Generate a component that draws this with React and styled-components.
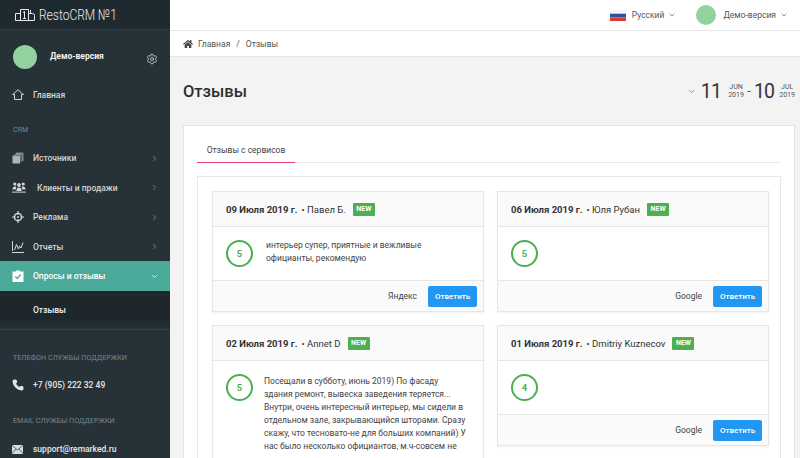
import React from "react";
import styled, { createGlobalStyle } from "styled-components";
import { ChevronRight, ChevronDown, Settings, Phone } from "lucide-react";
import { FaHome } from "react-icons/fa";

const Global = createGlobalStyle`
  html, body { margin: 0; padding: 0; height: 458px; overflow: hidden; background: #f3f3f3; }
  body { font-family: Roboto, "Liberation Sans", sans-serif; color: #333; }
  * { box-sizing: border-box; }
`;

const Page = styled.div`
  display: flex;
  width: 800px;
  height: 458px;
  overflow: hidden;
`;

const Sidebar = styled.aside`
  width: 170px;
  flex: none;
  background: #263238;
  color: #d5d8d9;
  overflow: hidden;
`;

const Brand = styled.div`
  height: 30px;
  display: flex;
  align-items: center;
  gap: 4px;
  padding-left: 15px;
  background: #1f2a30;
  border-bottom: 1px solid #2f3c43;
  color: #e8eaea;
  font-size: 15px;
  font-weight: 300;
  white-space: nowrap;
  span { display: block; transform: scaleX(0.8); transform-origin: left center; }
`;

const Profile = styled.div`
  display: flex;
  align-items: center;
  height: 50px;
  padding: 4px 12px 0 13px;
  font-size: 8.5px;
  font-weight: 700;
  color: #f2f2f2;
  span { margin: 0 auto 3px 13px; }
  svg { margin-top: 3px; }
`;

const Avatar = styled.div`
  width: ${(p) => p.size}px;
  height: ${(p) => p.size}px;
  flex: none;
  border-radius: 50%;
  background: #92d29c;
`;

const MenuItem = styled.div`
  height: 29.5px;
  display: flex;
  align-items: center;
  padding: 0 11px 0 12px;
  font-size: 8.5px;
  font-weight: 500;
  color: ${(p) => (p.$active ? "#fff" : "#d3d6d7")};
  background: ${(p) => (p.$active ? "#4ba99a" : "transparent")};
  svg:first-child { flex: none; width: ${(p) => p.$iconWidth || 12}px; }
  span { margin-left: ${(p) => p.$gap || 9}px; margin-right: auto; }
`;

const SectionLabel = styled.div`
  font-size: 7.2px;
  color: #7c8488;
  padding: ${(p) => p.$top}px 0 0 13px;
  height: ${(p) => p.$h}px;
  display: flex;
  align-items: center;
  white-space: nowrap;
`;

const SubMenu = styled.div`
  height: 39.25px;
  background: linear-gradient(#1e272c 75%, #263238);
  border-bottom: 1px solid #354249;
  padding-left: 33px;
  display: flex;
  align-items: center;
  font-size: 8.5px;
  font-weight: 500;
  color: #f2f2f2;
`;

const ContactRow = styled.div`
  height: 30px;
  display: flex;
  align-items: center;
  gap: ${(p) => p.$gap}px;
  padding-left: 12px;
  font-size: 8.5px;
  font-weight: 500;
  color: #e6e8e8;
`;

const Main = styled.main`
  flex: 1;
  min-width: 0;
  display: flex;
  flex-direction: column;
`;

const Topbar = styled.header`
  height: 31px;
  flex: none;
  background: #fff;
  border-bottom: 1px solid #e6e6e6;
  display: flex;
  align-items: center;
  justify-content: flex-end;
  gap: 20px;
  font-size: 8.5px;
  color: #555;
  padding-right: 12px;
`;

const TopItem = styled.div`
  display: flex;
  align-items: center;
  gap: ${(p) => p.$gap}px;
  white-space: nowrap;
  svg:last-child { margin-left: ${(p) => 4 - p.$gap}px; }
`;

const Crumbs = styled.nav`
  height: 26px;
  flex: none;
  background: #fff;
  border-bottom: 1px solid #e6e6e6;
  display: flex;
  align-items: center;
  padding-left: 13px;
  font-size: 8.5px;
  color: #555;
  svg { margin-right: 5px; }
  i { font-style: normal; margin: 0 6px; }
`;

const Content = styled.div`
  padding: 0 5px 0 13px;
  flex: 1;
  min-height: 0;
`;

const Heading = styled.div`
  height: 68px;
  display: flex;
  align-items: center;
  justify-content: space-between;
  h1 { margin: 0; font-size: 16.5px; font-weight: 500; color: #2e2e2e; }
`;

const DateRange = styled.div`
  display: flex;
  align-items: center;
  color: #333;
  font-size: 19.5px;
  letter-spacing: -0.8px;
`;

const DateSmall = styled.div`
  font-size: 7px;
  line-height: 8.5px;
  letter-spacing: 0;
  text-align: center;
  margin-left: ${(p) => p.$left}px;
  color: #555;
`;

const DateDash = styled.span`
  font-size: 14px;
  font-weight: 300;
  letter-spacing: 0;
  margin: 0 3px;
`;

const DateChevron = styled(ChevronDown)`
  margin-right: 5px;
`;

const Panel = styled.section`
  width: 612px;
  background: #fff;
  border: 1px solid #e4e4e4;
  padding: 12px 13px 0 13px;
  height: 400px;
`;

const Tabs = styled.div`
  height: 25px;
  border-bottom: 1px solid #e8e8e8;
`;

const Tab = styled.div`
  width: 98px;
  height: 25px;
  border-bottom: 1.5px solid #ec407a;
  font-size: 8.5px;
  color: #444;
  display: flex;
  align-items: center;
  justify-content: center;
`;

const CardsBox = styled.div`
  margin-top: 13px;
  border: 1px solid #e8e8e8;
  padding: 14px 12px 14px 14px;
  display: grid;
  grid-template-columns: 272px 272px;
  column-gap: 13px;
  row-gap: 13px;
`;

const Card = styled.article`
  border: 1px solid #e6e6e6;
  box-shadow: 0 1px 2px rgba(0, 0, 0, 0.06);
  background: #fff;
  align-self: ${(p) => (p.$tall ? "stretch" : "start")};
`;

const CardHead = styled.div`
  height: 35px;
  background: #fafafa;
  border-bottom: 1px solid #e6e6e6;
  display: flex;
  align-items: center;
  padding-left: 13px;
  font-size: 9.5px;
  color: #333;
  white-space: nowrap;
  b { font-weight: 700; margin-right: 4px; }
`;

const NewBadge = styled.span`
  background: #4caf50;
  color: #fff;
  font-size: 7px;
  font-weight: 700;
  height: 13px;
  width: 22px;
  display: flex;
  align-items: center;
  justify-content: center;
  margin-left: 7px;
  border-radius: 1px;
`;

const CardBody = styled.div`
  display: flex;
  gap: ${(p) => p.$gap || 13}px;
  padding: 13px;
  min-height: 53px;
  height: ${(p) => (p.$auto ? "auto" : "53px")};
  font-size: 8.5px;
  line-height: 13px;
  color: #444;
  p { margin: ${(p) => p.$textTop || 0}px 0 0; width: ${(p) => p.$textWidth}px; flex: none; }
`;

const Score = styled.div`
  width: 27px;
  height: 27px;
  flex: none;
  border-radius: 50%;
  border: 2px solid #4caf50;
  color: #4caf50;
  font-size: 9.5px;
  font-weight: 700;
  display: flex;
  align-items: center;
  justify-content: center;
`;

const CardFoot = styled.div`
  height: 31px;
  background: #fafafa;
  border-top: 1px solid #e6e6e6;
  display: flex;
  align-items: center;
  justify-content: flex-end;
  gap: 11px;
  padding-right: 6px;
  font-size: 8.5px;
  color: #444;
`;

const ReplyButton = styled.button`
  width: 49px;
  height: 21px;
  border: 0;
  border-radius: 2px;
  background: #2196f3;
  color: #fff;
  font: 500 8px Roboto, sans-serif;
  padding: 0;
`;

const Flag = () => (
  <svg width="16" height="11" viewBox="0 0 16 11">
    <rect width="16" height="3.7" fill="#f4f4f4" />
    <rect y="3.7" width="16" height="3.7" fill="#2a4fa8" />
    <rect y="7.4" width="16" height="3.6" fill="#e0392b" />
  </svg>
);

const Logo = () => (
  <svg width="20" height="12" viewBox="0 0 20 12" fill="none" stroke="#e8eaea" strokeWidth="1">
    <path d="M.5 11.500h19M.5 11.500V4.500h5M5.500 11.500V.5h8v11M13.500 11.500V4.500h4a2 2 0 0 1 2 2v5" />
    <path d="M8 3.500l1.500-1v6.500M8 9.500h3" />
    <path d="M15.500 4.500V1" />
  </svg>
);

const HomeIcon = () => (
  <svg width="12" height="11" viewBox="0 0 12 11" fill="none" stroke="#d3d6d7" strokeWidth="1">
    <path d="M.6 5.500 6 .8l5.400 4.700H9.500v5h-7v-5z" />
  </svg>
);

const SourcesIcon = () => (
  <svg width="12" height="12" viewBox="0 0 12 12" fill="#aeb3b5">
    <path d="M4 .5h7.500v8.500H10V2H4z" opacity=".65" />
    <path d="M2.500 2h7v8H8.500V3h-6z" opacity=".8" />
    <rect x=".5" y="3.500" width="7.500" height="8" />
  </svg>
);

const ClientsIcon = () => (
  <svg width="14" height="11" viewBox="0 0 14 11" fill="#d3d6d7">
    <circle cx="2.800" cy="2" r="1.600" />
    <circle cx="11.200" cy="2" r="1.600" />
    <circle cx="7" cy="3" r="1.900" />
    <path d="M.5 7.500c0-2 1-3 2.300-3s1.600.6 1.600.6c-.4.600-.6 1.400-.6 2.400zM13.500 7.500c0-2-1-3-2.300-3s-1.600.6-1.600.6c.4.600.6 1.400.6 2.400z" />
    <path d="M4.400 9c0-2.400 1.100-3.400 2.600-3.400S9.600 6.600 9.600 9z" />
    <rect y="9.600" width="14" height="1" />
  </svg>
);

const TargetIcon = () => (
  <svg width="12" height="12" viewBox="0 0 12 12" fill="none" stroke="#d3d6d7">
    <circle cx="6" cy="6" r="3.600" strokeWidth="1.500" />
    <path d="M6 0v3.500M6 8.500V12M0 6h3.500M8.500 6H12" strokeWidth="1.200" />
    <circle cx="6" cy="6" r="1" fill="#d3d6d7" stroke="none" />
  </svg>
);

const ChartIcon = () => (
  <svg width="12" height="12" viewBox="0 0 12 12" fill="none" stroke="#d3d6d7" strokeWidth="1">
    <path d="M.5 0v10M0 11.500h12" />
    <path d="M2.500 9 4.500 3.500 6.500 8l1-3 1.500 2 2-5.500" />
  </svg>
);

const SurveyIcon = () => (
  <svg width="11" height="12" viewBox="0 0 11 12">
    <path d="M0 1.500h3.500V.5h4v1H11V12H0z" fill="#fff" />
    <path d="M2.800 6.500 4.800 8.500 8.300 4.500" fill="none" stroke="#4ba99a" strokeWidth="1.300" />
  </svg>
);

const MailIcon = () => (
  <svg width="11" height="9" viewBox="0 0 11 9" fill="#d8dbdc" stroke="#263238" strokeWidth=".7">
    <rect width="11" height="9" stroke="none" />
    <path d="M0 .3 5.500 5 11 .3M0 8.700 4 3.800M11 8.700 7 3.800" fill="none" />
  </svg>
);

const reviews = [
  { date: "09 Июля 2019 г.", name: "Павел Б.", score: 5, source: "Яндекс", text: "интерьер супер, приятные и вежливые официанты, рекомендую", gap: 13, top: -1, width: 190 },
  { date: "06 Июля 2019 г.", name: "Юля Рубан", score: 5, source: "Google" },
  {
    date: "02 Июля 2019 г.",
    name: "Annet D",
    score: 5,
    text: [
      "Посещали в субботу, июнь 2019) По фасаду",
      "здания ремонт, вывеска заведения теряется...",
      "Внутри, очень интересный интерьер, мы сидели в",
      "отдельном зале, закрывающийся шторами. Сразу",
      "скажу, что тесновато-не для больших компаний) У",
      "нас было несколько официантов, м.ч-совсем не",
    ],
    gap: 11,
    top: 1,
    width: 210,
    tall: true,
  },
  { date: "01 Июля 2019 г.", name: "Dmitriy Kuznecov", score: 4, source: "Google" },
];

const nav = [
  { label: "Источники", Icon: SourcesIcon },
  { label: "Клиенты и продажи", Icon: ClientsIcon, gap: 11, iconWidth: 14 },
  { label: "Реклама", Icon: TargetIcon },
  { label: "Отчеты", Icon: ChartIcon },
];

export default function App() {
  return (
    <Page>
      <Global />
      <Sidebar>
        <Brand><Logo /><span>RestoCRM №1</span></Brand>
        <Profile>
          <Avatar size={24} />
          <span>Демо-версия</span>
          <Settings size={12} strokeWidth={1.4} color="#e8eaea" />
        </Profile>
        <MenuItem><HomeIcon /><span>Главная</span></MenuItem>
        <SectionLabel $h={33.75} $top={7}>CRM</SectionLabel>
        {nav.map(({ label, Icon, gap, iconWidth }) => (
          <MenuItem key={label} $gap={gap} $iconWidth={iconWidth}>
            <Icon />
            <span>{label}</span>
            <ChevronRight size={9} color="#8b9194" />
          </MenuItem>
        ))}
        <MenuItem $active>
          <SurveyIcon />
          <span>Опросы и отзывы</span>
          <ChevronDown size={9} />
        </MenuItem>
        <SubMenu>Отзывы</SubMenu>
        <SectionLabel $h={40} $top={14}>ТЕЛЕФОН СЛУЖБЫ ПОДДЕРЖКИ</SectionLabel>
        <ContactRow $gap={9}><Phone size={12} fill="#e6e8e8" />+7 (905) 222 32 49</ContactRow>
        <SectionLabel $h={34} $top={6}>EMAIL СЛУЖБЫ ПОДДЕРЖКИ</SectionLabel>
        <ContactRow $gap={10}><MailIcon /><span>support@remarked.ru</span></ContactRow>
      </Sidebar>
      <Main>
        <Topbar>
          <TopItem $gap={6}><Flag />Русский<ChevronDown size={8} /></TopItem>
          <TopItem $gap={7}><Avatar size={20} />Демо-версия<ChevronDown size={8} /></TopItem>
        </Topbar>
        <Crumbs>
          <FaHome size={10} color="#444" />Главная<i>/</i>Отзывы
        </Crumbs>
        <Content>
          <Heading>
            <h1>Отзывы</h1>
            <DateRange>
              <DateChevron size={9} color="#777" />
              11<DateSmall $left={7}>JUN<br />2019</DateSmall>
              <DateDash>-</DateDash>
              10<DateSmall $left={5}>JUL<br />2019</DateSmall>
            </DateRange>
          </Heading>
          <Panel>
            <Tabs><Tab>Отзывы с сервисов</Tab></Tabs>
            <CardsBox>
              {reviews.map((r) => (
                <Card key={r.date} $tall={r.tall}>
                  <CardHead>
                    <b>{r.date}</b>• {r.name}<NewBadge>NEW</NewBadge>
                  </CardHead>
                  <CardBody $gap={r.gap} $textTop={r.top} $textWidth={r.width} $auto={r.tall}>
                    <Score>{r.score}</Score>
                    {r.text && (
                      <p>
                        {Array.isArray(r.text)
                          ? r.text.map((line) => <React.Fragment key={line}>{line}<br /></React.Fragment>)
                          : r.text}
                      </p>
                    )}
                  </CardBody>
                  {r.source && (
                    <CardFoot>{r.source}<ReplyButton>Ответить</ReplyButton></CardFoot>
                  )}
                </Card>
              ))}
            </CardsBox>
          </Panel>
        </Content>
      </Main>
    </Page>
  );
}
